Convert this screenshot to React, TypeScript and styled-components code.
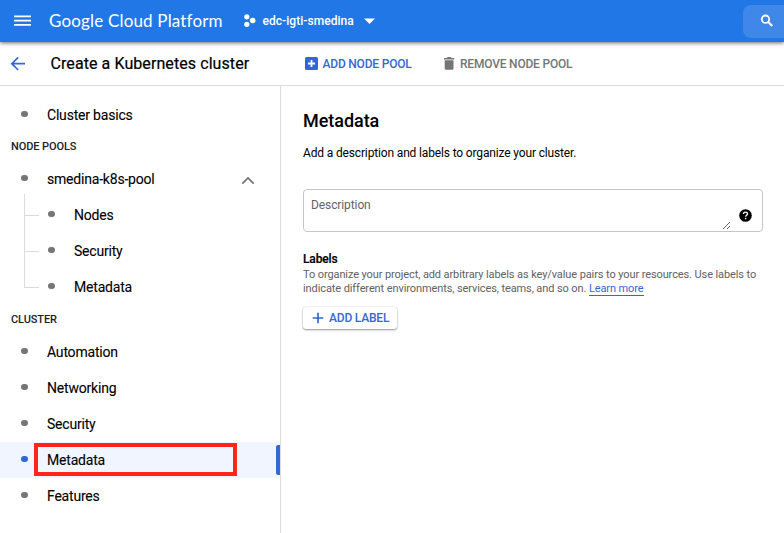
import React from "react";
import styled, { createGlobalStyle } from "styled-components";

const blue = "#3367d6";

const GlobalStyle = createGlobalStyle`
  * { box-sizing: border-box; }
  body {
    margin: 0;
    background: #fff;
    color: #000;
    font-family: Roboto, "Liberation Sans", sans-serif;
    overflow: hidden;
  }
  svg { display: block; flex: none; }
`;

const Page = styled.div`
  width: 784px;
  height: 533px;
  display: flex;
  flex-direction: column;
  overflow: hidden;
`;

const TopBar = styled.header`
  height: 42px;
  flex: none;
  display: flex;
  align-items: center;
  padding-left: 14px;
  background: #2277e6;
  color: #fff;
  box-shadow: 0 1px 4px rgba(0, 0, 0, 0.6);
  z-index: 1;
`;

const Brand = styled.div`
  width: 194px;
  margin-left: 18px;
  font: 400 17px/24px Lato, sans-serif;
  letter-spacing: 0.17px;
  white-space: nowrap;
`;

const ProjectPicker = styled.div`
  display: flex;
  align-items: center;
  font-size: 12px;
  font-weight: 500;
  letter-spacing: 0.05px;
`;

const ProjectName = styled.span`
  width: 101px;
  margin-left: 6.5px;
  white-space: nowrap;
`;

const SearchBox = styled.div`
  width: 41px;
  height: 33px;
  margin-left: auto;
  padding: 8px 0 0 15px;
  background: #3f87e9;
  border-radius: 8px 0 0 8px;
`;

const TitleBar = styled.div`
  height: 44px;
  flex: none;
  display: flex;
  align-items: center;
  padding-left: 10px;
  border-bottom: 1px solid #dadce0;
`;

const Title = styled.h1`
  width: 254px;
  margin: 0 0 0 25.5px;
  font-size: 16px;
  font-weight: 400;
  -webkit-text-stroke: 0.2px #000;
  letter-spacing: 0.08px;
  white-space: nowrap;
`;

const ToolAction = styled.div<{ $color: string; $width: number; $gap: number }>`
  width: ${(p) => p.$width}px;
  display: flex;
  align-items: center;
  gap: ${(p) => p.$gap}px;
  color: ${(p) => p.$color};
  font-size: 12px;
  font-weight: 500;
  letter-spacing: -0.2px;
  white-space: nowrap;
`;

const Columns = styled.div`
  flex: 1;
  display: flex;
  min-height: 0;
`;

const Sidebar = styled.nav`
  width: 281px;
  flex: none;
  padding-top: 11px;
  border-right: 1px solid #dadce0;
`;

const Section = styled.div<{ $height: number; $line: number }>`
  height: ${(p) => p.$height}px;
  padding-left: 11px;
  line-height: ${(p) => p.$line}px;
  font-size: 11px;
  font-weight: 500;
  letter-spacing: -0.1px;
  color: #202124;
`;

const NavRow = styled.div<{ $selected?: boolean }>`
  position: relative;
  height: 36px;
  display: flex;
  align-items: center;
  padding-left: 21px;
  font-size: 14px;
  letter-spacing: -0.2px;
  -webkit-text-stroke: 0.1px #000;
  background: ${(p) => (p.$selected ? "#f0f5ff" : "transparent")};
`;

const ChildRow = styled(NavRow)`
  padding-left: 48px;
`;

const Bullet = styled.span<{ $selected?: boolean }>`
  width: 6.5px;
  height: 6.5px;
  margin: 0 19.5px 2px 0;
  border-radius: 50%;
  background: ${(p) => (p.$selected ? blue : "#757575")};
`;

const Chevron = styled.div`
  margin: 2px 25px 0 auto;
`;

const Branch = styled.span<{ $first?: boolean; $last?: boolean }>`
  position: absolute;
  left: 24px;
  top: ${(p) => (p.$first ? -3 : 0)}px;
  bottom: ${(p) => (p.$last ? 17 : 0)}px;
  border-left: 1px solid #dadce0;

  &::after {
    content: "";
    position: absolute;
    left: 0;
    top: ${(p) => (p.$first ? 21 : 18)}px;
    width: 14px;
    height: 1px;
    background: #dadce0;
  }
`;

const SelectedBar = styled.span`
  position: absolute;
  right: 0;
  top: 3px;
  width: 4px;
  height: 30px;
  border-radius: 2px 0 0 2px;
  background: ${blue};
`;

const Highlight = styled.span`
  position: absolute;
  left: 34px;
  top: 1px;
  width: 203px;
  height: 33px;
  border: 4px solid #fc2718;
`;

const Content = styled.main`
  flex: 1;
  min-width: 0;
  padding: 23px 21px 0 22px;
`;

const Heading = styled.h2`
  margin: 0;
  font-size: 18px;
  line-height: 24px;
  font-weight: 500;
  letter-spacing: -0.05px;
`;

const Intro = styled.p`
  margin: 12px 0 28px;
  font-size: 12px;
  line-height: 16px;
  letter-spacing: -0.15px;
`;

const DescriptionField = styled.div`
  height: 43px;
  display: flex;
  padding: 7px 10px 0 7px;
  border: 1px solid #c4c6c9;
  border-radius: 4px;
  font-size: 12px;
  line-height: 16px;
  letter-spacing: -0.1px;
  color: #5f6368;
`;

const FieldLabel = styled.span`
  flex: 1;
`;

const ResizeGrip = styled.div`
  margin: 24px 8px 0 0;
`;

const HelpIcon = styled.div`
  margin-top: 12px;
`;

const LabelsTitle = styled.h3`
  margin: 20px 0 0;
  font-size: 12px;
  line-height: 15px;
  font-weight: 500;
  letter-spacing: -0.15px;
  -webkit-text-stroke: 0.2px #000;
`;

const LabelsText = styled.p`
  margin: 1px 0 0;
  font-size: 11px;
  line-height: 14px;
  letter-spacing: -0.1px;
  color: #616161;
  white-space: nowrap;
`;

const LearnMore = styled.a`
  color: ${blue};
  border-bottom: 1px solid ${blue};
`;

const AddLabel = styled.button`
  width: 94px;
  height: 22px;
  margin-top: 11px;
  padding: 0 0 0 9px;
  display: flex;
  align-items: center;
  gap: 5px;
  border: 0;
  border-radius: 3px;
  background: #fff;
  color: ${blue};
  font: 500 12px Roboto, sans-serif;
  letter-spacing: -0.2px;
  white-space: nowrap;
  box-shadow: 0 1px 2px rgba(0, 0, 0, 0.4), 0 0 2px rgba(0, 0, 0, 0.12);
`;

const clusterItems = ["Automation", "Networking", "Security", "Metadata", "Features"];
const poolItems = ["Nodes", "Security", "Metadata"];

export default function App() {
  return (
    <Page>
      <GlobalStyle />
      <TopBar>
        <svg width="17" height="12" viewBox="0 0 17 12" fill="#fff">
          <path d="M0 .6h17v1.7H0zM0 4.8h17v1.7H0zM0 9h17v1.7H0z" />
        </svg>
        <Brand>Google Cloud Platform</Brand>
        <ProjectPicker>
          <svg width="13" height="14" viewBox="0 0 13 14" fill="#fff">
            <circle cx="3.8" cy="2.8" r="2.6" />
            <circle cx="9.7" cy="6.5" r="2.8" />
            <circle cx="3.8" cy="10.3" r="2.6" />
          </svg>
          <ProjectName>edc-igti-smedina</ProjectName>
          <svg width="11" height="6" viewBox="0 0 11 6" fill="#fff">
            <path d="M0 .4h11L5.5 6z" />
          </svg>
        </ProjectPicker>
        <SearchBox>
          <svg width="18" height="18" viewBox="0 0 18 18" fill="none" stroke="#fff">
            <circle cx="7.5" cy="6.2" r="3.7" strokeWidth="1.8" />
            <path d="M10.2 8.9 14.3 13" strokeWidth="2.1" />
          </svg>
        </SearchBox>
      </TopBar>

      <TitleBar>
        <svg width="15" height="14" viewBox="0 0 15 14" fill="none" stroke={blue} strokeWidth="1.7">
          <path d="M15 6.7H2M8.2.4 1.8 6.7l6.4 6.3" />
        </svg>
        <Title>Create a Kubernetes cluster</Title>
        <ToolAction $color={blue} $width={138.5} $gap={5}>
          <svg width="13" height="13" viewBox="0 0 13 13">
            <rect width="13" height="13" rx="1.5" fill={blue} />
            <path d="M6.5 3v7M3 6.5h7" stroke="#fff" strokeWidth="1.8" />
          </svg>
          ADD NODE POOL
        </ToolAction>
        <ToolAction $color="#757575" $width={140} $gap={5}>
          <svg width="12" height="13" viewBox="0 0 12 13" fill="#757575">
            <path d="M1 1h2.8l.8-.9h3l.8.9h2.8v1.4H1zM1.7 3.2h8.8v8.2q0 1.4-1.4 1.4h-6q-1.4 0-1.4-1.4z" />
          </svg>
          REMOVE NODE POOL
        </ToolAction>
      </TitleBar>

      <Columns>
        <Sidebar>
          <NavRow>
            <Bullet />
            Cluster basics
          </NavRow>
          <Section $height={28} $line={27}>NODE POOLS</Section>
          <NavRow>
            <Bullet />
            smedina-k8s-pool
            <Chevron>
              <svg width="14" height="9" viewBox="0 0 14 9" fill="none" stroke="#757575" strokeWidth="1.8">
                <path d="M1.3 7.6 7 1.9l5.7 5.7" />
              </svg>
            </Chevron>
          </NavRow>
          {poolItems.map((name, i) => (
            <ChildRow key={name}>
              <Branch $first={i === 0} $last={i === poolItems.length - 1} />
              <Bullet />
              {name}
            </ChildRow>
          ))}
          <Section $height={29} $line={29}>CLUSTER</Section>
          {clusterItems.map((name) => {
            const selected = name === "Metadata";
            return (
              <NavRow key={name} $selected={selected}>
                <Bullet $selected={selected} />
                {name}
                {selected && <Highlight />}
                {selected && <SelectedBar />}
              </NavRow>
            );
          })}
        </Sidebar>

        <Content>
          <Heading>Metadata</Heading>
          <Intro>Add a description and labels to organize your cluster.</Intro>
          <DescriptionField>
            <FieldLabel>Description</FieldLabel>
            <ResizeGrip>
              <svg width="9" height="9" viewBox="0 0 9 9" stroke="#555" strokeWidth="0.9">
                <path d="M1 8 8 1M5 8l3-3" />
              </svg>
            </ResizeGrip>
            <HelpIcon>
              <svg width="13" height="13" viewBox="0 0 13 13">
                <circle cx="6.5" cy="6.5" r="6.3" fill="#000" />
                <path d="M4.5 5.1q0-2 2-2t2 1.8c0 1.3-1.9 1.3-1.9 2.8" fill="none" stroke="#fff" strokeWidth="1.3" />
                <path d="M5.9 8.8h1.4v1.4H5.9z" fill="#fff" />
              </svg>
            </HelpIcon>
          </DescriptionField>
          <LabelsTitle>Labels</LabelsTitle>
          <LabelsText>
            To organize your project, add arbitrary labels as key/value pairs to your resources. Use labels to
            <br />
            indicate different environments, services, teams, and so on. <LearnMore>Learn more</LearnMore>
          </LabelsText>
          <AddLabel>
            <svg width="12" height="12" viewBox="0 0 12 12" stroke={blue} strokeWidth="1.7">
              <path d="M6 .7v10.6M.7 6h10.6" />
            </svg>
            ADD LABEL
          </AddLabel>
        </Content>
      </Columns>
    </Page>
  );
}
